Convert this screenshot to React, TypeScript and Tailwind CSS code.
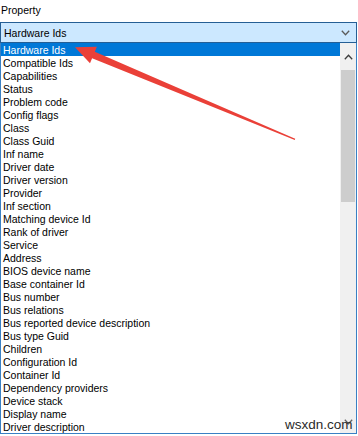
import React from 'react';

const items = [
  'Hardware Ids',
  'Compatible Ids',
  'Capabilities',
  'Status',
  'Problem code',
  'Config flags',
  'Class',
  'Class Guid',
  'Inf name',
  'Driver date',
  'Driver version',
  'Provider',
  'Inf section',
  'Matching device Id',
  'Rank of driver',
  'Service',
  'Address',
  'BIOS device name',
  'Base container Id',
  'Bus number',
  'Bus relations',
  'Bus reported device description',
  'Bus type Guid',
  'Children',
  'Configuration Id',
  'Container Id',
  'Dependency providers',
  'Device stack',
  'Display name',
  'Driver description',
];

const Chevron: React.FC<{ up?: boolean; className?: string }> = ({ up, className }) => (
  <svg width="9" height="6" viewBox="0 0 9 6" className={className}>
    <path
      d={up ? 'M0.8 5.2 L4.5 1.3 L8.2 5.2' : 'M0.8 0.8 L4.5 4.7 L8.2 0.8'}
      fill="none"
      stroke="currentColor"
      strokeWidth="1.3"
    />
  </svg>
);

export default function App() {
  return (
    <div
      className="relative w-[358px] h-[436px] bg-white overflow-hidden text-[10.5px] text-black"
      style={{ fontFamily: '"Liberation Sans", Arial, sans-serif' }}
    >
      <div className="h-[22px] pl-px pt-[4px] leading-[13px]">Property</div>

      {/* combo box */}
      <div className="w-[357px] h-[21px] border border-[#255f95] bg-[#cce8ff] flex items-center justify-between pl-[3px] pr-[6px]">
        <span className="leading-[19px] pt-px">Hardware Ids</span>
        <Chevron className="text-[#5a5a5a]" />
      </div>

      {/* drop-down list */}
      <div className="w-[357px] h-[391px] border-x border-b border-[#3a80c4] flex">
        <div className="flex-1 flex flex-col">
          {items.map((item, i) => (
            <div
              key={item}
              className={
                i === 0
                  ? 'h-[13px] leading-[13px] pl-[2px] pt-px bg-[#0078d7] text-white'
                  : 'h-[13px] leading-[13px] pl-[2px] pt-px'
              }
            >
              {item}
            </div>
          ))}
        </div>

        {/* scrollbar */}
        <div className="w-[16px] bg-[#f0f0f0] flex flex-col">
          <div className="h-[27px] flex items-center justify-center text-[#3c3c3c]">
            <Chevron up />
          </div>
          <div className="h-[132px] mx-px bg-[#cdcdcd]" />
          <div className="flex-1" />
          <div className="h-[22px] flex items-center justify-center text-[#606060]">
            <Chevron />
          </div>
        </div>
      </div>

      {/* annotation arrow */}
      <svg
        className="absolute left-0 top-0 pointer-events-none"
        width="358"
        height="436"
        viewBox="0 0 358 436"
      >
        <polygon
          points="75,47.3 96.9,46.7 94.8,51.7 295.2,138.8 294.8,139.9 92.1,58.2 90,63.3"
          fill="#ea4038"
        />
      </svg>

      {/* watermark */}
      <div
        className="absolute left-[285px] top-[417px] text-[13.5px] leading-[16px] text-[#2a2a2a]"
        style={{ fontFamily: '"Liberation Sans", Arial, sans-serif' }}
      >
        wsxdn.com
      </div>
    </div>
  );
}
